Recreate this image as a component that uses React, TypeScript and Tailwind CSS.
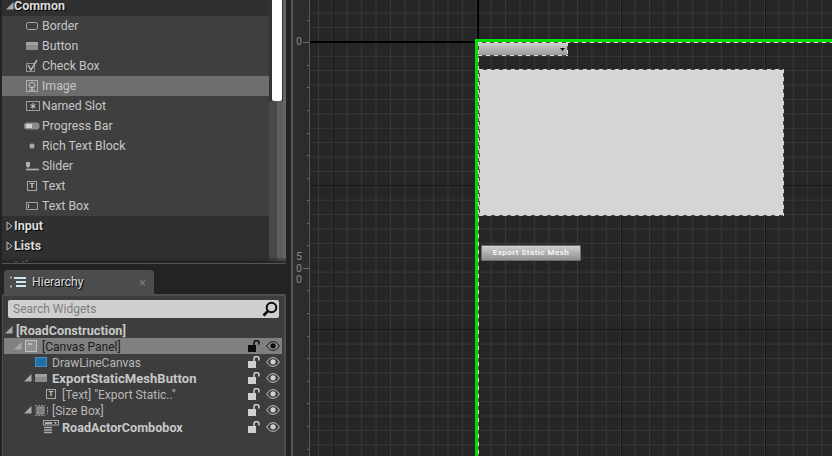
import type { ReactNode } from "react";

// --- small editor icons ---

function Svg({ w = 14, h = 12, children }: { w?: number; h?: number; children: ReactNode }) {
  return (
    <svg width={w} height={h} viewBox={`0 0 ${w} ${h}`} className="block shrink-0">
      {children}
    </svg>
  );
}

const stroke = "#a8a8a8";

const BorderIcon = () => (
  <Svg><rect x="0.5" y="2.5" width="11" height="7" rx="2" fill="none" stroke={stroke} /></Svg>
);
const ButtonIcon = () => (
  <Svg>
    <rect x="0" y="2" width="12" height="8" fill="#8c8c8c" />
    <rect x="0" y="2" width="12" height="3" fill="#a0a0a0" />
  </Svg>
);
const CheckIcon = () => (
  <Svg>
    <rect x="0.5" y="3.5" width="8" height="8" fill="none" stroke="#909090" />
    <path d="M2 5l3 5 6-10" fill="none" stroke="#c4c4c4" strokeWidth="1.4" />
  </Svg>
);
const ImageIcon = () => (
  <Svg h={13}>
    <rect x="0.5" y="0.5" width="11" height="11" fill="none" stroke="#b0b0b0" />
    <circle cx="6" cy="5" r="3" fill="none" stroke="#c4c4c4" />
    <path d="M6 6v4M3 10h6" stroke="#c4c4c4" />
  </Svg>
);
const SlotIcon = () => (
  <Svg>
    <rect x="0.5" y="1.5" width="13" height="9" fill="none" stroke="#a0a0a0" />
    <path d="M7 3v6M4.5 4.5l5 3M9.5 4.5l-5 3" stroke="#d0d0d0" />
  </Svg>
);
const ProgressIcon = () => (
  <svg width="16" height="8" viewBox="0 0 16 8" className="block shrink-0 -ml-[2px]">
    <rect x="0" y="0.5" width="15.5" height="7" rx="3" fill="#8a8a8a" />
    <rect x="2" y="2" width="6" height="4" fill="#d0d0d0" />
  </svg>
);
const DotIcon = () => (
  <Svg><circle cx="6" cy="6" r="2.6" fill="#a8a8a8" /></Svg>
);
const SliderIcon = () => (
  <Svg>
    <path d="M-1 9.5h14" stroke="#b0b0b0" strokeWidth="1.6" />
    <path d="M0 2h4v4l-2 2-2-2z" fill="#b0b0b0" />
  </Svg>
);
const TextIcon = () => (
  <span className="block w-[10px] h-[10px] ml-[1px] border border-[#a8a8a8] text-[8px] leading-[8px] font-bold text-center text-[#c8c8c8]">
    T
  </span>
);
const TextBoxIcon = () => (
  <Svg>
    <rect x="0.5" y="2.5" width="11" height="7" fill="none" stroke="#a0a0a0" />
    <path d="M2.5 4v4" stroke="#c0c0c0" />
  </Svg>
);
const BlueBox = () => <span className="block w-[12px] h-[10px] bg-[#1f6fa8] border border-[#4a8fc0]" />;
const CanvasIcon = () => (
  <Svg h={13}>
    <rect x="0.5" y="0.5" width="11" height="11" fill="#8e8e8e" stroke="#c0c0c0" />
    <path d="M3 4h4" stroke="#d0dce8" strokeWidth="1.2" />
  </Svg>
);
const SizeBoxIcon = () => (
  <Svg h={13}>
    <path d="M0 1.5h10M0 11.5h10M0 1.5v10" fill="none" stroke="#8a8a8a" strokeDasharray="2 1" />
    <rect x="2" y="3" width="7" height="7" fill="#7e7e7e" stroke="#9c9c9c" />
    <path d="M12.5 3v7" stroke="#9c9c9c" strokeDasharray="2 1" />
  </Svg>
);
const ComboIcon = () => (
  <svg width="16" height="14" viewBox="0 0 16 14" className="block shrink-0 -ml-[2px]">
    <rect x="0.5" y="0.5" width="15" height="4.5" fill="none" stroke="#a8a8a8" />
    <rect x="2" y="2" width="7" height="2" fill="#b0b0b0" />
    <path d="M11 2h3l-1.5 2z" fill="#c8c8c8" />
    <path d="M1 7.5h8M1 10h8M1 12.5h8" stroke="#a8a8a8" strokeWidth="1.4" />
  </svg>
);

const Lock = ({ dark }: { dark?: boolean }) => (
  <svg width="13" height="12" viewBox="0 0 13 12" className="block shrink-0">
    <rect x="0" y="5" width="8" height="7" fill={dark ? "#0c0c0c" : "#cfcfcf"} />
    <path d="M6 5V3a2.5 2.5 0 0 1 5 0v1.5" fill="none" stroke={dark ? "#0c0c0c" : "#cfcfcf"} strokeWidth="1.5" />
  </svg>
);
const Eye = ({ dark }: { dark?: boolean }) => (
  <svg width="14" height="10" viewBox="0 0 14 10" className="block shrink-0">
    <path d="M0.7 5C3 1.4 5 .7 7 .7s4 .7 6.3 4.3C11 8.6 9 9.3 7 9.3S3 8.6.7 5z" fill={dark ? "#8a8a8a" : "#3e3e3e"} stroke={dark ? "#0c0c0c" : "#cfcfcf"} strokeWidth="1" />
    <circle cx="7" cy="4.8" r="2.6" fill={dark ? "#0c0c0c" : "#cfcfcf"} />
  </svg>
);

const OpenArrow = () => (
  <svg width="8" height="8" viewBox="0 0 8 8" className="block shrink-0">
    <path d="M0 7.5L7.5 0v7.5z" fill="#a8a8a8" />
  </svg>
);
const ClosedArrow = () => (
  <svg width="7" height="10" viewBox="0 0 7 10" className="block shrink-0">
    <path d="M1 1l5 4-5 4z" fill="none" stroke="#c0c0c0" />
  </svg>
);

// --- data ---

const palette = [
  { name: "Border", icon: <BorderIcon /> },
  { name: "Button", icon: <ButtonIcon /> },
  { name: "Check Box", icon: <CheckIcon /> },
  { name: "Image", icon: <ImageIcon />, selected: true },
  { name: "Named Slot", icon: <SlotIcon /> },
  { name: "Progress Bar", icon: <ProgressIcon /> },
  { name: "Rich Text Block", icon: <DotIcon /> },
  { name: "Slider", icon: <SliderIcon /> },
  { name: "Text", icon: <TextIcon /> },
  { name: "Text Box", icon: <TextBoxIcon /> },
];

const tree = [
  { name: "[Canvas Panel]", icon: <CanvasIcon />, row: "pl-[10px]", label: "text-[12px] text-[#1a1a1a]", arrow: true, selected: true },
  { name: "DrawLineCanvas", icon: <BlueBox />, row: "pl-[20px]", label: "text-[12px] text-[#b8b8b8]" },
  { name: "ExportStaticMeshButton", icon: <ButtonIcon />, row: "pl-[20px]", label: "text-[13px] font-bold tracking-[0.06px] text-[#c8c8c8]", arrow: true },
  { name: '[Text] "Export Static.."', icon: <TextIcon />, row: "pl-[30px]", label: "text-[12px] text-[#b8b8b8]" },
  { name: "[Size Box]", icon: <SizeBoxIcon />, row: "pl-[20px]", label: "text-[12px] text-[#b8b8b8]", arrow: true },
  { name: "RoadActorCombobox", icon: <ComboIcon />, row: "pl-[30px] mt-px", label: "text-[12.6px] font-bold text-[#c8c8c8]" },
];

const rulerTicks = [20, 42, 65, 87, 110, 133, 155, 178, 200, 223, 245, 268, 290, 313, 336, 358, 381, 403, 426, 449];

function SectionHeader({ label }: { label: string }) {
  return (
    <div className="flex items-center h-5 bg-[#303030] shrink-0">
      <span className="w-[12px] flex justify-center pl-[3px]">
        <ClosedArrow />
      </span>
      <span className="text-[12.5px] font-bold text-[#dcdcdc] [text-shadow:1px_1px_0_#000]">{label}</span>
    </div>
  );
}

function PaletteList() {
  return (
    <div className="flex-1 flex flex-col overflow-hidden">
      <div className="flex items-start h-4 bg-[#303030] shrink-0">
        <span className="w-[12px] flex justify-center pl-[3px] pt-[2px]">
          <OpenArrow />
        </span>
        <span className="text-[12.5px] leading-[12px] font-bold text-[#dcdcdc] [text-shadow:1px_1px_0_#000]">Common</span>
      </div>
      {palette.map((item) => (
        <div
          key={item.name}
          className={`flex items-center h-5 shrink-0 pl-[24px] text-[12.3px] text-[#c6c6c6] ${
            item.selected ? "bg-[#6e6e6e]" : "bg-[#3f3f3f]"
          }`}
        >
          <span className="w-[16px] flex items-center">{item.icon}</span>
          <span>{item.name}</span>
        </div>
      ))}
      <SectionHeader label="Input" />
      <SectionHeader label="Lists" />
      <SectionHeader label="Misc" />
    </div>
  );
}

function Scrollbar() {
  return (
    <div className="w-[17px] flex shrink-0 bg-[#333333]">
      <div className="w-[14px] flex flex-col">
        <div className="ml-[3px] w-[10px] h-[101px] bg-white rounded-b-[2px]" />
        <div className="flex-1 pl-[8px] bg-[#484848]">
          <div className="h-full bg-[#5e5e5e]" />
        </div>
      </div>
      <div className="w-[3px] bg-[#646464]" />
    </div>
  );
}

function HierarchyPanel() {
  return (
    <div className="flex-1 flex flex-col min-h-0 pl-[2px] mt-[6px]">
      <div className="flex items-center w-[150px] h-[24px] ml-[2px] px-[6px] bg-[#4c4c4c] rounded-t-[3px]">
        <svg width="16" height="12" viewBox="0 0 16 12" className="block shrink-0">
          <path d="M0 1.5h2M0 10.5h2" stroke="#c0c0c0" strokeWidth="1.5" />
          <path d="M4 2h12M6 6h10M6 10h10" stroke="#cfe6f2" strokeWidth="2" />
        </svg>
        <span className="ml-[6px] text-[12.2px] text-[#dadada] [text-shadow:1px_1px_0_#000]">Hierarchy</span>
        <span className="ml-auto mr-[2px] text-[13px] leading-none text-[#7c7c7c]">×</span>
      </div>
      <div className="flex-1 bg-[#3d3d3d] border-t-[2px] border-r-[2px] border-l border-[#4e4e4e] rounded-t-[2px] pt-[4px]">
        <div className="flex items-center justify-between h-[18px] mx-[5px] pl-[5px] pr-[1px] bg-[#cfcfcf] rounded-[2px]">
          <span className="text-[12px] text-[#7d7d7d]">Search Widgets</span>
          <svg width="16" height="16" viewBox="0 0 16 16" className="block">
            <circle cx="9.5" cy="6.5" r="4.8" fill="none" stroke="#0c0c0c" strokeWidth="2" />
            <path d="M6 10l-4.5 4.5" stroke="#0c0c0c" strokeWidth="2.6" />
          </svg>
        </div>
        <div className="flex items-center h-4 mt-[4px] pl-[2px]">
          <OpenArrow />
          <span className="ml-[3px] pt-[2px] text-[12.7px] font-bold text-[#c8c8c8]">[RoadConstruction]</span>
        </div>
        {tree.map((row) => (
          <div
            key={row.name}
            className={`flex items-center h-4 ml-px mr-[2px] ${row.row} ${row.selected ? "bg-[#808080]" : ""}`}
          >
            <span className="w-[8px] shrink-0">{row.arrow && <OpenArrow />}</span>
            <span className="w-[13px] ml-[3px] shrink-0 flex items-center">{row.icon}</span>
            <span className={`ml-[4px] pt-[2px] ${row.label}`}>{row.name}</span>
            <span className="ml-auto flex items-center gap-[5px] pr-[2px]">
              <Lock dark={row.selected} />
              <Eye dark={row.selected} />
            </span>
          </div>
        ))}
      </div>
    </div>
  );
}

function Ruler() {
  return (
    <div className="relative w-[19px] ml-[5px] shrink-0 bg-[#2c2c2c] border-l-2 border-r border-[#565656]">
      {rulerTicks.map((y) => (
        <span
          key={y}
          style={{ top: y }}
          className={`absolute right-0 h-px bg-[#6a6a6a] ${y === 42 || y === 268 ? "w-[6px]" : "w-[2px]"}`}
        />
      ))}
      <span className="absolute top-[36px] left-[3px] text-[10.5px] leading-[12px] text-[#8a8a8a]">0</span>
      <span className="absolute top-[251px] left-[3px] text-[10.5px] leading-[11.5px] text-[#8a8a8a]">
        5<br />0<br />0
      </span>
    </div>
  );
}

const dashed =
  "bg-no-repeat [background-image:repeating-linear-gradient(90deg,#d8d8d8_0_4px,#4a4a4a_4px_8px),repeating-linear-gradient(90deg,#d8d8d8_0_4px,#4a4a4a_4px_8px),repeating-linear-gradient(180deg,#d8d8d8_0_4px,#4a4a4a_4px_8px),repeating-linear-gradient(180deg,#d8d8d8_0_4px,#4a4a4a_4px_8px)] [background-size:100%_1px,100%_1px,1px_100%,1px_100%] [background-position:0_0,0_100%,0_0,100%_0]";

function DesignerCanvas() {
  return (
    <div className="relative flex-1 overflow-hidden bg-[#262626] [background-image:linear-gradient(to_right,#181818_1px,transparent_1px),linear-gradient(to_bottom,#181818_1px,transparent_1px),linear-gradient(to_right,#383838_1px,transparent_1px),linear-gradient(to_bottom,#383838_1px,transparent_1px)] [background-size:144px_144px,144px_144px,14.4px_14.4px,14.4px_14.4px] [background-position:23px_41px,0_41px,8px_12.6px,0_12.6px]">
      {/* origin lines */}
      <div className="absolute left-0 top-[41px] w-[167px] h-[1.5px] bg-black" />
      <div className="absolute left-[167px] top-0 w-[1.5px] h-[40px] bg-black" />

      {/* green widget bounds */}
      <div className="absolute left-[165px] top-[39px] right-0 bottom-0 border-l-[3px] border-t-[3px] border-[#00e000]">
        <div className={`absolute left-0 top-0 w-[400px] h-[500px] ${dashed}`} />

        <div className="absolute left-0 top-0 w-[90px] h-[14px] bg-gradient-to-b from-[#d4d4d4] to-[#969696] flex items-center justify-end pr-[3px]">
          <svg width="5" height="3" viewBox="0 0 5 3" className="block">
            <path d="M0 0h5L2.5 3z" fill="#111" />
          </svg>
          <div className={`absolute inset-0 ${dashed}`} />
        </div>

        <div className={`absolute left-[1px] top-[27px] w-[305px] h-[147px] bg-[#d6d6d6] ${dashed}`} />

        <div className="absolute left-[3px] top-[203px] w-[100px] h-[16px] flex items-center justify-center rounded-[1px] border border-[#6e6e6e] bg-gradient-to-b from-[#d0d0d0] to-[#909090]">
          <span className="text-[8px] font-bold tracking-[0.45px] text-[#f4f4f4]">Export Static Mesh</span>
        </div>
      </div>
    </div>
  );
}

export default function App() {
  return (
    <div className="flex w-[832px] h-[456px] overflow-hidden bg-[#232323] font-['Roboto',sans-serif]">
      <div className="w-[286px] shrink-0 flex flex-col">
        <div className="relative h-[264px] shrink-0 ml-[2px] flex overflow-hidden border-b border-[#565656]">
          <PaletteList />
          <Scrollbar />
          <div className="absolute left-0 right-0 bottom-0 h-[6px] bg-gradient-to-b from-transparent to-[#232323]" />
        </div>
        <HierarchyPanel />
      </div>
      <Ruler />
      <DesignerCanvas />
    </div>
  );
}
